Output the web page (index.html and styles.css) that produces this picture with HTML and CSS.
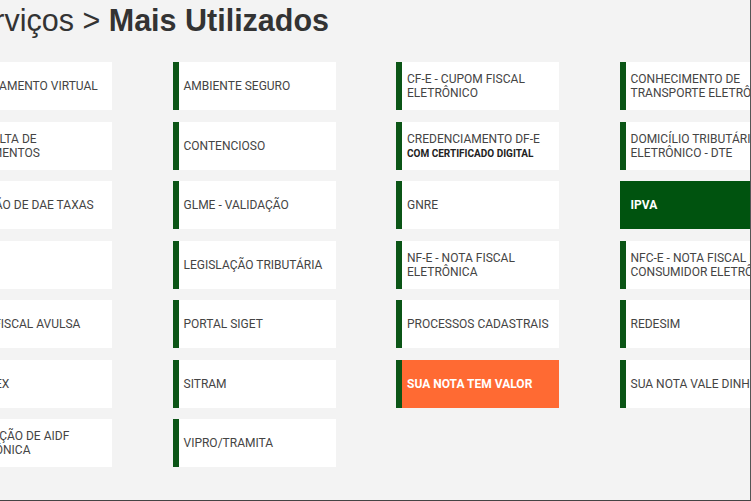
FILE: index.html
```html
<!DOCTYPE html>
<html lang="pt-BR">
<head>
<meta charset="utf-8">
<title>Serviços &gt; Mais Utilizados</title>
<link rel="stylesheet" href="styles.css">
</head>
<body>
<div class="frame">
  <div class="page">
    <h1 class="title">Serviços &gt; <strong>Mais Utilizados</strong></h1>
    <div class="grid">
      <a class="card">AGENDAMENTO VIRTUAL</a>
      <a class="card">AMBIENTE SEGURO</a>
      <a class="card">CF-E - CUPOM FISCAL ELETRÔNICO</a>
      <a class="card">CONHECIMENTO DE TRANSPORTE ELETRÔNICO</a>

      <a class="card">CONSULTA DE DOCUMENTOS</a>
      <a class="card">CONTENCIOSO</a>
      <a class="card"><span>CREDENCIAMENTO DF-E<br><b class="sub">COM CERTIFICADO DIGITAL</b></span></a>
      <a class="card">DOMICÍLIO TRIBUTÁRIO ELETRÔNICO - DTE</a>

      <a class="card">EMISSÃO DE DAE TAXAS</a>
      <a class="card">GLME - VALIDAÇÃO</a>
      <a class="card">GNRE</a>
      <a class="card card-green">IPVA</a>

      <a class="card">ITCD</a>
      <a class="card">LEGISLAÇÃO TRIBUTÁRIA</a>
      <a class="card">NF-E - NOTA FISCAL ELETRÔNICA</a>
      <a class="card">NFC-E - NOTA FISCAL DE CONSUMIDOR ELETRÔNICA</a>

      <a class="card">NOTA FISCAL AVULSA</a>
      <a class="card">PORTAL SIGET</a>
      <a class="card">PROCESSOS CADASTRAIS</a>
      <a class="card">REDESIM</a>

      <a class="card">SIMPLEX</a>
      <a class="card">SITRAM</a>
      <a class="card card-orange">SUA NOTA TEM VALOR</a>
      <a class="card">SUA NOTA VALE DINHEIRO</a>

      <a class="card">LIBERAÇÃO DE AIDF ELETRÔNICA</a>
      <a class="card">VIPRO/TRAMITA</a>
    </div>
  </div>
</div>
</body>
</html>
```

FILE: styles.css
```css
html, body {
  margin: 0;
  padding: 0;
  width: 751px;
  height: 501px;
  overflow: hidden;
  background: #f3f3f3;
}

.frame {
  box-sizing: border-box;
  width: 751px;
  height: 501px;
  overflow: hidden;
  border-right: 1px solid #555;
  border-bottom: 1px solid #444;
}

.page {
  margin-left: -51px;
  width: 840px;
}

.title {
  margin: 0;
  padding: 3px 0 0 8px;
  height: 62px;
  box-sizing: border-box;
  font-family: "Liberation Sans", Arial, sans-serif;
  font-size: 30.5px;
  font-weight: normal;
  line-height: 34px;
  color: #333;
}

.title strong {
  font-weight: bold;
}

.grid {
  display: grid;
  grid-template-columns: repeat(4, 163px);
  grid-auto-rows: 48px;
  column-gap: 60.5px;
  row-gap: 11.5px;
}

.card {
  display: flex;
  align-items: center;
  box-sizing: border-box;
  background: #fff;
  border-left: 6px solid #0b5516;
  padding: 0 0 0 5px;
  font-family: Roboto, "Liberation Sans", sans-serif;
  font-size: 12px;
  line-height: 14px;
  color: #444;
  text-decoration: none;
}

.sub {
  font-size: 10px;
  line-height: 13px;
  font-weight: bold;
  color: #222;
}

.card-green {
  background: #00530f;
  border-left-color: #00530f;
  color: #fff;
  font-weight: bold;
}

.card-orange {
  background: #ff6a33;
  color: #fff;
  font-weight: bold;
}
```
